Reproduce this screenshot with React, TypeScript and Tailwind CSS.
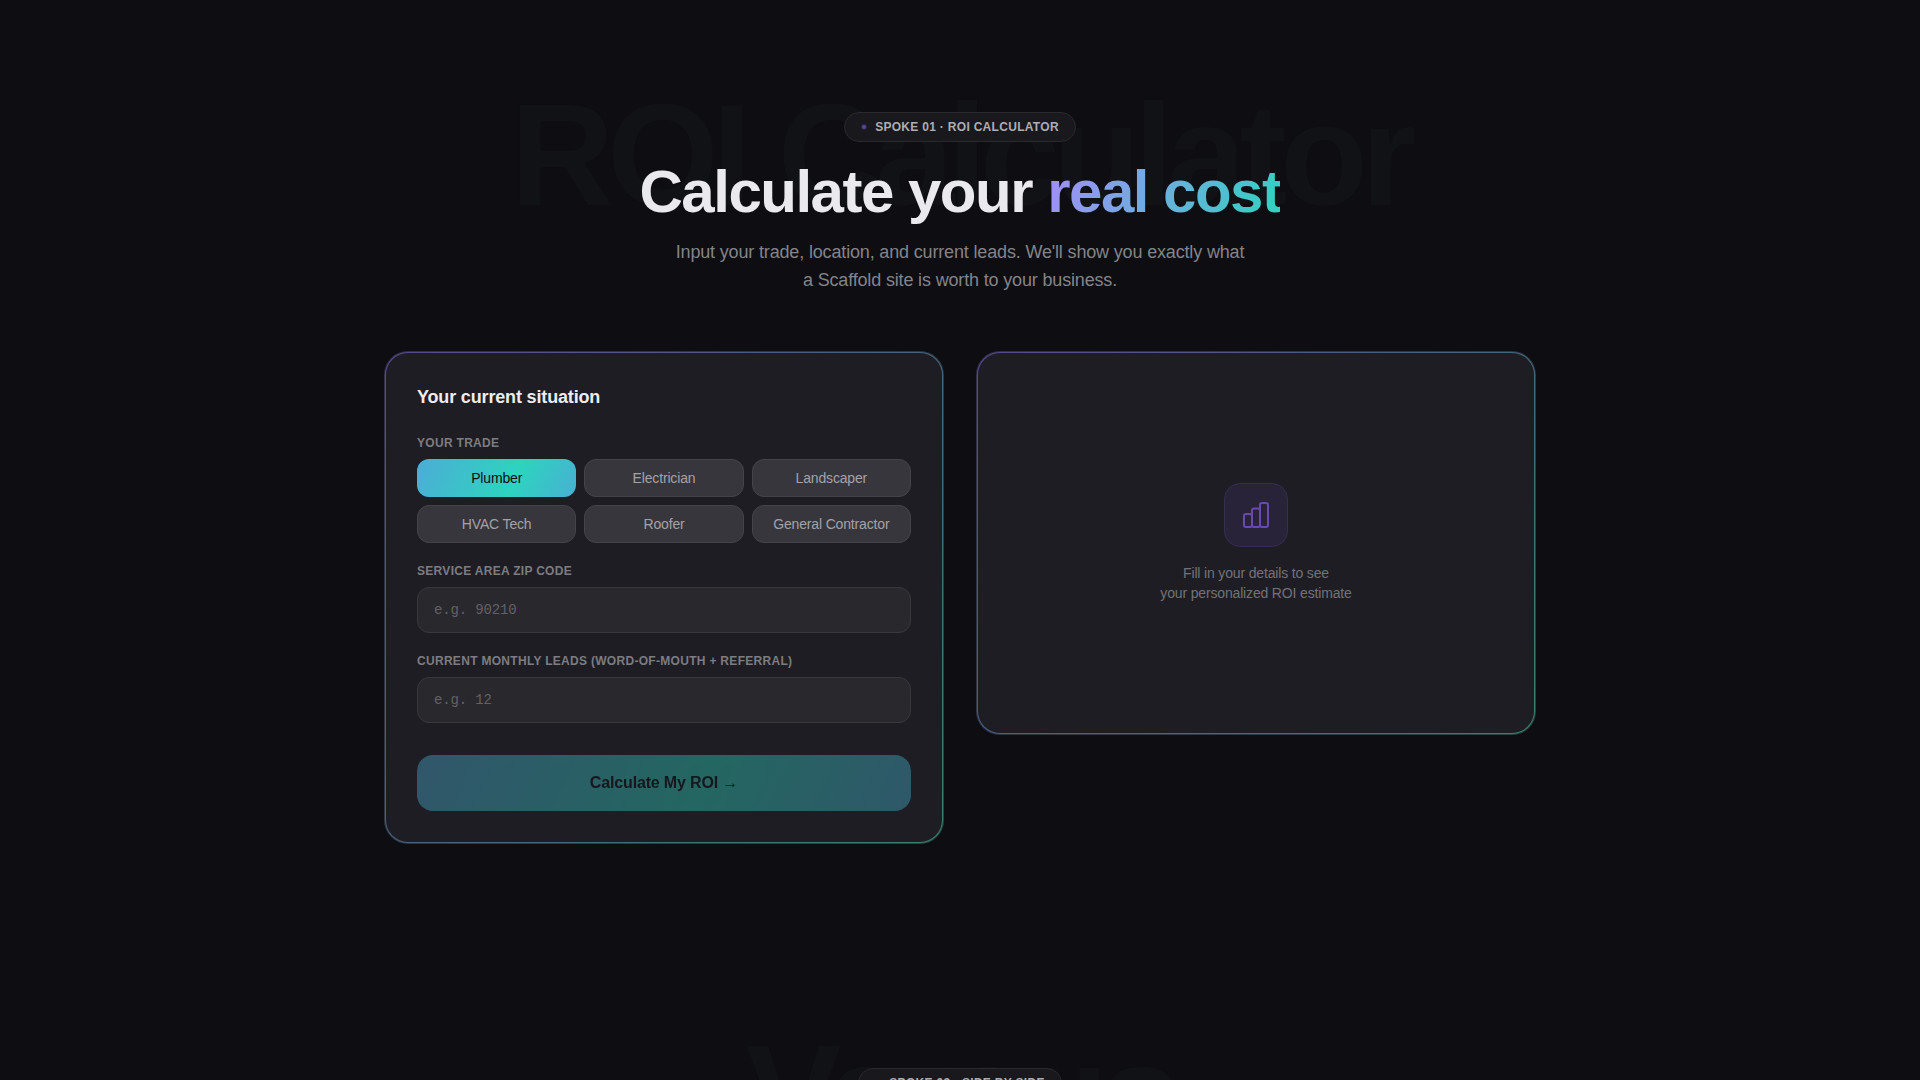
import { useState } from 'react';
import type { ReactNode } from 'react';
import clsx from 'clsx';

const trades = ['Plumber', 'Electrician', 'Landscaper', 'HVAC Tech', 'Roofer', 'General Contractor'];

function Eyebrow({ children }: { children: ReactNode }) {
  return (
    <div className="relative inline-flex items-center gap-2 rounded-full border border-[#29292e] bg-[#18181d] px-4 py-1.5 text-xs font-semibold uppercase tracking-wide text-[#adadb3]">
      <span className="flex size-1.5 items-center justify-center rounded-full bg-[#2a2547]">
        <span className="size-1 rounded-full bg-[#54469a]" />
      </span>
      {children}
    </div>
  );
}

function Watermark({ children }: { children: ReactNode }) {
  return (
    <div
      aria-hidden="true"
      className="pointer-events-none absolute left-1/2 -translate-x-1/2 select-none whitespace-nowrap text-[144px] font-bold leading-none tracking-tighter text-[#101216]"
    >
      {children}
    </div>
  );
}

function GradientCard({ children }: { children: ReactNode }) {
  return (
    <div className="rounded-3xl border border-[#0d0d12]/50 bg-[linear-gradient(135deg,#584a8c,#46627e_50%,#3a8070)] bg-origin-border p-px">
      <div className="rounded-[22px] bg-[#1e1d23]">{children}</div>
    </div>
  );
}

function BarsIcon() {
  return (
    <svg width="28" height="28" viewBox="0 0 28 28" fill="none" stroke="currentColor" strokeWidth="2" strokeLinejoin="round">
      <rect x="2" y="13" width="8" height="13" rx="2" />
      <rect x="10" y="7.5" width="8" height="18.5" rx="2" />
      <rect x="18" y="2" width="8" height="24" rx="2" />
    </svg>
  );
}

const labelClass = 'block text-xs font-semibold uppercase tracking-wide text-[#7d7c82]';
const inputClass =
  'mt-2 block w-full rounded-xl border border-[#38373c] bg-[#29282d] px-4 py-3 font-["Liberation_Mono",monospace] text-sm text-[#ececf1] placeholder:text-[#626167] focus:outline-none';

function CalculatorForm() {
  const [trade, setTrade] = useState('Plumber');
  const [zip, setZip] = useState('');
  const [leads, setLeads] = useState('');

  return (
    <form className="p-[31px]" onSubmit={(e) => e.preventDefault()}>
      <h3 className="mb-6 text-lg/[27px] font-semibold text-[#ececf1]">Your current situation</h3>
      <div className="flex flex-col gap-5">
        <div role="group" aria-labelledby="trade-label">
          <span id="trade-label" className={labelClass}>
            Your trade
          </span>
          <div className="mt-2 grid grid-cols-3 gap-2">
            {trades.map((name) => (
              <button
                key={name}
                type="button"
                aria-pressed={trade === name}
                onClick={() => setTrade(name)}
                className={clsx(
                  'rounded-xl border py-2 text-sm',
                  trade === name
                    ? 'border-transparent bg-[linear-gradient(115deg,#4dacd6,#2dd4bf_60%,#48b0d2)] bg-origin-border text-[#0d0d12]'
                    : 'border-[#444349] bg-[#37363c] text-[#a3a2a8]'
                )}
              >
                {name}
              </button>
            ))}
          </div>
        </div>
        <div>
          <label htmlFor="zip" className={labelClass}>
            Service area ZIP code
          </label>
          <input
            id="zip"
            type="text"
            placeholder="e.g. 90210"
            value={zip}
            onChange={(e) => setZip(e.target.value)}
            className={inputClass}
          />
        </div>
        <div>
          <label htmlFor="leads" className={labelClass}>
            Current monthly leads (word-of-mouth + referral)
          </label>
          <input
            id="leads"
            type="text"
            placeholder="e.g. 12"
            value={leads}
            onChange={(e) => setLeads(e.target.value)}
            className={inputClass}
          />
        </div>
      </div>
      <button
        type="submit"
        disabled={!zip || !leads}
        className="mt-8 w-full rounded-2xl bg-[linear-gradient(115deg,#4dacd6,#2dd4bf_58%,#48b0d2)] py-4 text-base font-semibold text-[#0d0d12] disabled:opacity-40"
      >
        Calculate My ROI →
      </button>
    </form>
  );
}

export default function App() {
  return (
    <div className="h-screen overflow-hidden bg-[#0d0d12] font-['Liberation_Sans',Arial,sans-serif] tracking-[-0.01em] text-[#e9e9ee]">
      <section className="px-6 py-28">
        <header className="relative mb-[57px] flex flex-col items-center text-center">
          <div className="absolute inset-x-0 -top-7">
            <Watermark>ROI Calculator</Watermark>
          </div>
          <Eyebrow>Spoke 01 · ROI Calculator</Eyebrow>
          <h2 className="relative mt-5 text-6xl font-bold tracking-tight">
            Calculate your{' '}
            <span className="bg-[linear-gradient(115deg,#a78bfa,#2dd4bf)] bg-clip-text text-transparent">real cost</span>
          </h2>
          <p className="relative mt-4 max-w-xl text-lg text-[#84848a]">
            Input your trade, location, and current leads. We'll show you exactly what a Scaffold site is worth to your
            business.
          </p>
        </header>

        <div className="mx-auto grid max-w-6xl grid-cols-2 items-start gap-8">
          <GradientCard>
            <CalculatorForm />
          </GradientCard>
          <GradientCard>
            <div className="flex min-h-[380px] flex-col items-center justify-center gap-4 text-center">
              <div className="flex size-16 items-center justify-center rounded-2xl border border-[#362d50] bg-[#29233a] text-[#6849ae]">
                <BarsIcon />
              </div>
              <p className="text-sm text-[#737278]">
                Fill in your details to see
                <br />
                your personalized ROI estimate
              </p>
            </div>
          </GradientCard>
        </div>
      </section>

      <section className="px-6 py-28">
        <header className="relative flex flex-col items-center text-center">
          <div className="absolute inset-x-0 -top-11">
            <Watermark>Versus</Watermark>
          </div>
          <Eyebrow>Spoke 02 · Side by side</Eyebrow>
        </header>
      </section>
    </div>
  );
}
